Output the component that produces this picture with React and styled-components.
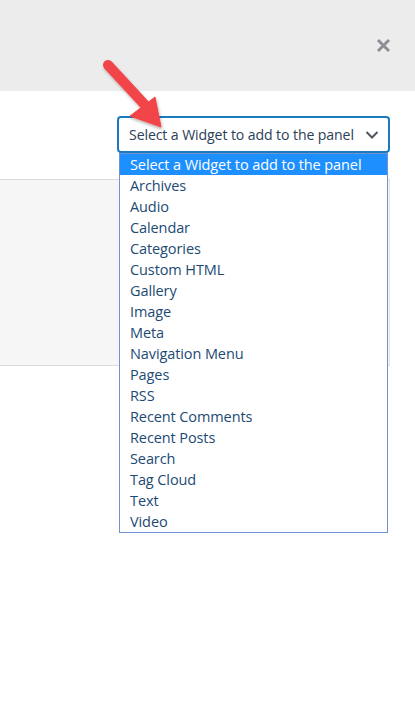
import React from "react";
import styled, { createGlobalStyle } from "styled-components";

const Global = createGlobalStyle`
  html, body { margin: 0; padding: 0; background: #fff; }
  body { font-family: "Open Sans", "Noto Sans", sans-serif; }
  * { box-sizing: border-box; }
`;

const Page = styled.div`
  position: relative;
  width: 415px;
  height: 701px;
  background: #fff;
  overflow: hidden;
`;

const Header = styled.div`
  height: 91px;
  background: #ececec;
  display: flex;
  justify-content: flex-end;
  align-items: center;
  padding-right: 24px;
`;

const CloseBtn = styled.button`
  border: 0;
  background: transparent;
  padding: 0;
  width: 16px;
  height: 16px;
  display: flex;
  align-items: center;
  justify-content: center;
`;

const Toolbar = styled.div`
  display: flex;
  justify-content: flex-end;
  padding: 25px 25px 0 0;
`;

const SelectWrap = styled.div`
  position: relative;
  width: 273px;
`;

const SelectBox = styled.div`
  height: 37px;
  border: 2px solid #1a7ac0;
  border-radius: 4px;
  display: flex;
  align-items: center;
  justify-content: space-between;
  padding: 0 9px 0 10px;
  font-size: 14.1px;
  letter-spacing: -0.1px;
  color: #2a4058;
  background: #fff;
  white-space: nowrap;
`;

const List = styled.ul`
  position: absolute;
  top: 37px;
  left: 2px;
  right: 2px;
  margin: 0;
  padding: 0;
  list-style: none;
  border: 1px solid #6f93d2;
  background: #fff;
  z-index: 5;
`;

const Item = styled.li`
  height: 21px;
  line-height: 21px;
  padding-left: 10px;
  font-size: 14.5px;
  letter-spacing: -0.1px;
  color: ${(p) => (p.$active ? "#fff" : "#1c4a73")};
  background: ${(p) => (p.$active ? "#1e8fff" : "transparent")};
  white-space: nowrap;
`;

const Panel = styled.div`
  margin-top: 26px;
  width: 390px;
  height: 187px;
  background: #f6f6f6;
  border-top: 1px solid #dcdcdc;
  border-bottom: 1px solid #dcdcdc;
  border-right: 1px solid #e2e2e2;
`;

const ArrowOverlay = styled.svg`
  position: absolute;
  left: 95px;
  top: 52px;
  width: 80px;
  height: 85px;
  overflow: visible;
  z-index: 10;
`;

const items = [
  "Select a Widget to add to the panel",
  "Archives",
  "Audio",
  "Calendar",
  "Categories",
  "Custom HTML",
  "Gallery",
  "Image",
  "Meta",
  "Navigation Menu",
  "Pages",
  "RSS",
  "Recent Comments",
  "Recent Posts",
  "Search",
  "Tag Cloud",
  "Text",
  "Video",
];

export default function App() {
  return (
    <Page>
      <Global />
      <Header>
        <CloseBtn aria-label="Close">
          <svg width="15" height="15" viewBox="0 0 15 15">
            <path d="M2 2 L13 13 M13 2 L2 13" stroke="#8c8f94" strokeWidth="3" strokeLinecap="butt" />
          </svg>
        </CloseBtn>
      </Header>
      <Toolbar>
        <SelectWrap>
          <SelectBox>
            <span>Select a Widget to add to the panel</span>
            <svg width="14" height="10" viewBox="0 0 14 10">
              <path d="M1.5 2 L7 7.5 L12.5 2" fill="none" stroke="#50575e" strokeWidth="2" />
            </svg>
          </SelectBox>
          <List>
            {items.map((t, i) => (
              <Item key={t} $active={i === 0}>
                {t}
              </Item>
            ))}
          </List>
        </SelectWrap>
      </Toolbar>
      <Panel />
      <ArrowOverlay viewBox="0 0 80 85">
        <defs>
          <filter id="sh" x="-30%" y="-30%" width="160%" height="160%">
            <feDropShadow dx="1" dy="2" stdDeviation="1.5" floodColor="#000" floodOpacity="0.3" />
          </filter>
        </defs>
        <g filter="url(#sh)" fill="#f24548" stroke="#f24548">
          <path d="M13 13 L50 53" strokeWidth="10" strokeLinecap="round" fill="none" />
          <path d="M35 64 L60 45 L66 75 Z" strokeWidth="1" strokeLinejoin="round" />
        </g>
      </ArrowOverlay>
    </Page>
  );
}
